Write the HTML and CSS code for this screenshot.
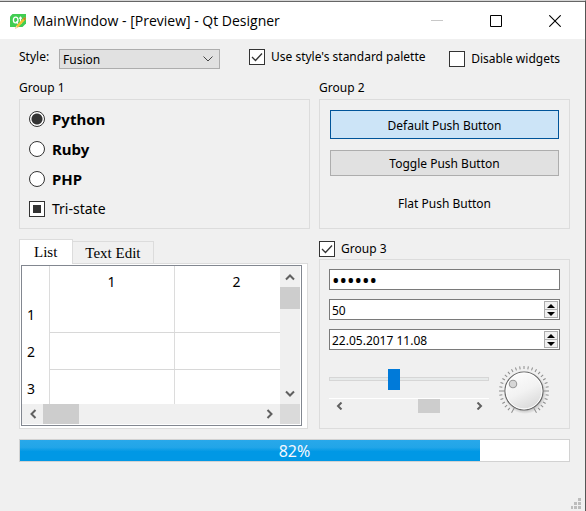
FILE: index.html
```html
<!DOCTYPE html>
<html lang="en">
<head>
<meta charset="utf-8">
<title>MainWindow - [Preview] - Qt Designer</title>
<link rel="stylesheet" href="styles.css">
</head>
<body>
<div class="window">
  <header class="titlebar">
    <svg class="app-icon" width="16" height="16" viewBox="0 0 16 16" aria-hidden="true">
      <path d="M2.5 1H16v9.500L12.500 14H0V3.500z" fill="#41cd52"/>
      <ellipse cx="5.700" cy="7" rx="2.300" ry="2.900" fill="none" stroke="#fff" stroke-width="1.300"/>
      <path d="M6 8.500l2 2.200M10.500 3.500V9q0 1.200 1.500 1M9 5.200h3" fill="none" stroke="#fff" stroke-width="1.200"/>
      <path d="M14.500 4l1.700 1.800-8.200 8.600-3 1.300 1.300-3z" fill="#f5c131"/>
      <path d="M14.500 4l1.700 1.800-1.700 1.700-1.700-1.700z" fill="#b8862c"/>
      <path d="M6.300 12.700l1.700 1.700-3 1.300z" fill="#e8dcc0"/>
    </svg>
    <h1 class="title">MainWindow - [Preview] - Qt Designer</h1>
    <div class="window-controls">
      <button class="window-button" aria-label="Minimize" disabled><svg width="12" height="12"><path d="M0 5.500h12" stroke="#c8c8c8"/></svg></button>
      <button class="window-button" aria-label="Maximize"><svg width="12" height="12"><path d="M.5.5h11v11H.5z" fill="none" stroke="#000"/></svg></button>
      <button class="window-button" aria-label="Close"><svg width="12" height="12"><path d="M.3.300l11.400 11.400M11.700.300L.3 11.700" stroke="#000" stroke-width="1.100"/></svg></button>
    </div>
  </header>

  <main class="content">
    <div class="options">
      <label for="style">Style:</label>
      <select id="style" class="combo"><option>Fusion</option></select>
      <label class="check palette"><input type="checkbox" class="box" checked>Use style's standard palette</label>
      <label class="check disable"><input type="checkbox" class="box">Disable widgets</label>
    </div>

    <div class="groups">
      <section class="group">
        <h2 class="group-title">Group 1</h2>
        <div class="frame choices">
          <label class="choice"><input type="radio" name="lang" class="dot" checked>Python</label>
          <label class="choice"><input type="radio" name="lang" class="dot">Ruby</label>
          <label class="choice"><input type="radio" name="lang" class="dot">PHP</label>
          <label class="choice tri"><input type="checkbox" class="box partial">Tri-state</label>
        </div>
      </section>

      <section class="group">
        <h2 class="group-title">Group 2</h2>
        <div class="frame buttons">
          <button class="push default">Default Push Button</button>
          <button class="push toggle">Toggle Push Button</button>
          <button class="push flat">Flat Push Button</button>
        </div>
      </section>

      <section class="tabs">
        <div class="tab-bar" role="tablist">
          <button class="tab active" role="tab" aria-selected="true">List</button>
          <button class="tab" role="tab" aria-selected="false">Text Edit</button>
        </div>
        <div class="pane" role="tabpanel">
          <div class="scroll-area">
            <div class="viewport">
              <table class="sheet">
                <colgroup><col class="col-head"><col class="col-data"><col class="col-data"></colgroup>
                <thead><tr><td></td><th>1</th><th>2</th></tr></thead>
                <tbody>
                  <tr><th>1</th><td></td><td></td></tr>
                  <tr><th>2</th><td></td><td></td></tr>
                  <tr><th>3</th><td></td><td></td></tr>
                </tbody>
              </table>
            </div>
            <div class="bar vertical">
              <button class="arrow" aria-label="Scroll up"><svg width="10" height="8"><path d="M1 6.500l4-4 4 4" class="chevron"/></svg></button>
              <div class="thumb"></div>
              <button class="arrow end" aria-label="Scroll down"><svg width="10" height="8"><path d="M1 1.500l4 4 4-4" class="chevron"/></svg></button>
            </div>
            <div class="bar horizontal">
              <button class="arrow" aria-label="Scroll left"><svg width="8" height="10"><path d="M6.500 1l-4 4 4 4" class="chevron"/></svg></button>
              <div class="thumb"></div>
              <button class="arrow end" aria-label="Scroll right"><svg width="8" height="10"><path d="M1.500 1l4 4-4 4" class="chevron"/></svg></button>
            </div>
            <div class="corner"></div>
          </div>
        </div>
      </section>

      <section class="group third">
        <label class="check"><input type="checkbox" class="box" checked>Group 3</label>
        <div class="frame fields">
          <input class="field password" type="password" value="secret" aria-label="Password">
          <div class="spin">
            <input class="field" type="text" value="50" aria-label="Number">
            <div class="steppers">
              <button class="step" aria-label="Increase"><svg width="8" height="4"><path d="M0 4l4-4 4 4z"/></svg></button>
              <button class="step" aria-label="Decrease"><svg width="8" height="4"><path d="M0 0h8L4 4z"/></svg></button>
            </div>
          </div>
          <div class="spin">
            <input class="field" type="text" value="22.05.2017 11.08" aria-label="Date and time">
            <div class="steppers">
              <button class="step" aria-label="Later"><svg width="8" height="4"><path d="M0 4l4-4 4 4z"/></svg></button>
              <button class="step" aria-label="Earlier"><svg width="8" height="4"><path d="M0 0h8L4 4z"/></svg></button>
            </div>
          </div>
          <div class="sliders">
            <div class="tracks">
              <input class="slider" type="range" min="0" max="100" value="40" aria-label="Slider">
              <div class="mini-bar">
                <button class="arrow" aria-label="Scroll left"><svg width="7" height="8"><path d="M5.500.500L2 4l3.500 3.500" class="chevron"/></svg></button>
                <div class="mini-track"><div class="thumb"></div></div>
                <button class="arrow" aria-label="Scroll right"><svg width="7" height="8"><path d="M1.500.500L5 4 1.500 7.500" class="chevron"/></svg></button>
              </div>
            </div>
            <svg class="dial" width="52" height="52" viewBox="-26 -26 52 52" role="slider" aria-label="Dial" aria-valuenow="30">
              <defs>
                <linearGradient id="knob" x1="0" y1="0" x2="0.500" y2="1"><stop offset="0" stop-color="#fff"/><stop offset=".6" stop-color="#f2f2f2"/><stop offset="1" stop-color="#dcdcdc"/></linearGradient>
                <radialGradient id="shade"><stop offset=".82" stop-color="#999"/><stop offset="1" stop-color="#999" stop-opacity="0"/></radialGradient>
              </defs>
              <g id="ticks" stroke="#8c8c8c" stroke-width="1"></g>
              <circle cx="1" cy="1.500" r="21.500" fill="url(#shade)" opacity=".5"/>
              <circle r="19" fill="url(#knob)" stroke="#666" stroke-width="1.200"/>
              <circle r="17.900" fill="none" stroke="#fff" stroke-width="1"/>
              <circle cx="-11" cy="-7" r="3.700" fill="#d6d6d6" stroke="#999" stroke-width="1.100"/>
            </svg>
          </div>
        </div>
      </section>
    </div>

    <div class="progress">
      <progress class="meter" max="551" value="462" aria-label="Progress"></progress>
      <span class="percent">82%</span>
    </div>
  </main>
  <svg class="grip" width="11" height="11" aria-hidden="true"><path d="M7 0h3v3H7zM3 4h3v3H3zM7 4h3v3H7zM0 8h2v3H0zM3 8h3v3H3zM7 8h3v3H7z" fill="#bdbdbd"/></svg>
</div>
<script src="dial.js"></script>
</body>
</html>
```
FILE: styles.css
```css
* { box-sizing: border-box; }

body {
  margin: 0;
  font: 12px/16px "Noto Sans", sans-serif;
  color: #000;
}

button { margin: 0; padding: 0; border: 0; background: none; font: inherit; color: inherit; }
svg { display: block; }

.window {
  position: relative;
  display: flex;
  flex-direction: column;
  min-height: 100vh;
  border-top: 1px solid #d6d6d6;
  border-right: 1px solid #555;
  background: #f0f0f0;
}

.titlebar {
  display: flex;
  align-items: center;
  height: 38px;
  padding: 0 1px 0 10px;
  border-top: 1px solid #666;
  background: #fff;
}
.title {
  flex: 1;
  margin: 0 0 0 7px;
  font: 14px/20px "Open Sans", sans-serif;
  white-space: nowrap;
}
.window-controls { display: flex; }
.window-button {
  display: flex;
  align-items: center;
  justify-content: center;
  width: 59px;
  height: 36px;
}

.content { padding: 10px 15px 0 19px; }

.options { display: flex; height: 38px; align-items: flex-start; }
.options > label:first-child { width: 40px; }
.combo {
  appearance: none;
  width: 161px;
  height: 20px;
  padding: 1px 3px 0;
  border: 1px solid #adadad;
  border-radius: 0;
  background: #e1e1e1 url("data:image/svg+xml,%3Csvg xmlns='http://www.w3.org/2000/svg' width='10' height='6'%3E%3Cpath d='M.5.5L5 5 9.500.5' fill='none' stroke='%23444'/%3E%3C/svg%3E") no-repeat right 6px center;
  font: inherit;
  color: #000;
}

.check { display: flex; align-items: center; gap: 6px; white-space: nowrap; }
.palette { margin-left: 29px; }
.disable { margin: 2px 0 0 auto; padding-right: 10px; }

.box, .dot {
  appearance: none;
  flex: none;
  width: 16px;
  height: 16px;
  margin: 0;
  border: 1px solid #333;
  background: #fff no-repeat center;
}
.box:checked {
  background-image: url("data:image/svg+xml,%3Csvg xmlns='http://www.w3.org/2000/svg' width='12' height='10'%3E%3Cpath d='M1 5l3.500 3.500L11 1.500' fill='none' stroke='%23333' stroke-width='1.300'/%3E%3C/svg%3E");
}
.partial { background-image: linear-gradient(#333, #333); background-size: 8px 8px; }
.dot { border-radius: 50%; }
.dot:checked { background-image: radial-gradient(circle, #333 5px, transparent 6px); }

.groups {
  display: grid;
  grid-template-columns: 291fr 251fr;
  column-gap: 9px;
  row-gap: 10px;
}
.group, .tabs { display: flex; flex-direction: column; min-width: 0; }
.group-title { margin: -7px 0 3px; font: inherit; }
.frame { flex: 1; border: 1px solid #dcdcdc; }

.choices { display: flex; flex-direction: column; gap: 10px; padding: 9px; }
.choice {
  display: flex;
  align-items: center;
  gap: 7px;
  font-size: 15px;
  line-height: 20px;
  font-weight: bold;
}
.tri { font-size: 14px; font-weight: normal; }

.buttons { display: flex; flex-direction: column; padding: 10px 10px 9px; }
.push { height: 26px; padding-top: 2px; border: 1px solid transparent; }
.default { height: 29px; border-color: #005499; background: #cce4f7; }
.toggle { margin: 11px 0 14px; border-color: #adadad; background: #e1e1e1; }

.tab-bar { display: flex; align-items: flex-end; height: 25px; }
.tab {
  height: 23px;
  padding: 0 12px;
  border: 1px solid #dcdcdc;
  border-left: 0;
  font: 15px/20px "Liberation Serif", serif;
}
.active {
  z-index: 1;
  height: 25px;
  padding: 0 15px 0 14px;
  border-left: 1px solid #dcdcdc;
  border-bottom: 0;
  background: #fff;
}
.pane {
  flex: 1;
  margin: -1px 2px 0 0;
  padding: 1px 5px 2px 1px;
  border: 1px solid #dcdcdc;
  background: #fff;
}
.scroll-area {
  display: grid;
  grid-template-columns: 1fr 20px;
  grid-template-rows: 138px 20px;
  padding-right: 1px;
  padding-bottom: 1px;
  border: 1px solid #828790;
}
.viewport { overflow: hidden; min-width: 0; }
.sheet { width: 277px; border-collapse: collapse; table-layout: fixed; font: 14px/20px "Noto Sans", sans-serif; }
.col-head { width: 27px; }
.col-data { width: 125px; }
.sheet th, .sheet td { padding: 2px 0 0; border-right: 1px solid #dcdcdc; }
.sheet thead tr { height: 29px; }
.sheet tbody tr { height: 37px; }
.sheet th { font-weight: normal; }
.sheet tbody th { padding-left: 5px; text-align: left; }
.sheet tbody td { border-bottom: 1px solid #d8d8d8; }

.bar { display: flex; background: #f0f0f0; }
.vertical { flex-direction: column; }
.thumb { background: #cdcdcd; }
.vertical .thumb { height: 22px; }
.horizontal .thumb { width: 36px; }
.arrow { display: flex; align-items: center; justify-content: center; width: 21px; height: 20px; }
.vertical .arrow { width: 20px; height: 21px; }
.end { margin-left: auto; }
.vertical .end { margin: auto 0 0; }
.chevron { fill: none; stroke: #606060; stroke-width: 2; }
.corner { background: #dadada; }

.third { padding-top: 2px; }
.third .check { margin-bottom: 2px; }
.fields { display: flex; flex-direction: column; gap: 9px; padding: 9px; }
.field {
  width: 100%;
  height: 21px;
  padding: 2px 2px 0;
  border: 1px solid #7a7a7a;
  border-radius: 0;
  background: #fff;
  font: inherit;
  color: #000;
}
.password { font: 20px/18px "Noto Sans", sans-serif; }
.spin { position: relative; height: 21px; }
.steppers {
  position: absolute;
  top: 2px;
  right: 2px;
  display: grid;
  width: 14px;
  height: 17px;
  border: 1px solid #adadad;
  background: #f0f0f0;
}
.step { display: flex; align-items: center; justify-content: center; }
.step + .step { border-top: 1px solid #adadad; }

.sliders { display: flex; align-items: flex-start; gap: 9px; padding-top: 5px; }
.tracks { flex: 1; min-width: 0; padding-top: 4px; }
.slider { display: block; appearance: none; width: 100%; height: 21px; margin: 0; background: none; }
.slider::-webkit-slider-runnable-track { height: 4px; border: 1px solid #d6d6d6; background: #e7eaea; }
.slider::-webkit-slider-thumb { appearance: none; width: 12px; height: 21px; margin-top: -9px; background: #007ad9; }
.mini-bar { display: flex; height: 15px; margin-top: 9px; border-top: 1px solid #fff; }
.mini-bar .arrow { width: 20px; height: 14px; }
.mini-track { flex: 1; display: flex; justify-content: flex-end; padding-right: 29px; }
.mini-bar .thumb { width: 22px; }
.dial { flex: none; margin: 1px 10px 0 0; }

.progress { display: grid; margin-top: 10px; }
.meter, .percent { grid-area: 1 / 1; }
.meter { appearance: none; width: 100%; height: 23px; border: 1px solid #d2d2d2; }
.meter::-webkit-progress-bar { background: #fff; }
.meter::-webkit-progress-value { background: linear-gradient(#28a8ea, #22a5e8 35%, #0098e5 55%, #0098e5); }
.percent { z-index: 1; place-self: center; font-size: 16px; line-height: 22px; color: #f4f8ff; }

.grip { position: absolute; right: 3px; bottom: 2px; }
```
FILE: dial.js
```js
const ns = "http://www.w3.org/2000/svg";
const ticks = document.getElementById("ticks");
for (let deg = -150; deg <= 150; deg += 10) {
  const line = document.createElementNS(ns, "line");
  const major = Math.abs(deg) === 150 || Math.abs(deg) === 90;
  line.setAttribute("y1", major ? -19.5 : -22);
  line.setAttribute("y2", -25);
  line.setAttribute("transform", `rotate(${deg})`);
  ticks.appendChild(line);
}
```
